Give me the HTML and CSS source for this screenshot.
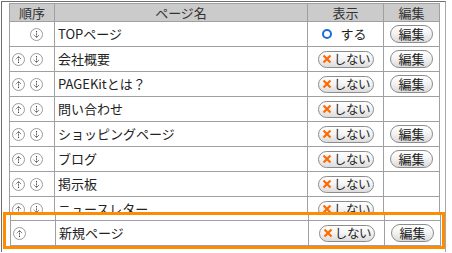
FILE: index.html
```html
<!DOCTYPE html>
<html lang="ja">
<head>
<meta charset="utf-8">
<link rel="stylesheet" href="styles.css">
</head>
<body>
<div class="frame">
  <table class="pages">
    <colgroup><col class="c1"><col class="c2"><col class="c3"><col class="c4"></colgroup>
    <thead>
      <tr><th>順序</th><th>ページ名</th><th>表示</th><th>編集</th></tr>
    </thead>
    <tbody>
      <tr>
        <td class="ord"><span class="arr blank"></span><svg class="arr" viewBox="0 0 13 13"><circle cx="6.5" cy="6.5" r="6"/><path d="M6.5 3v6.5M3.8 6.8l2.7 2.7 2.7-2.7"/></svg></td>
        <td class="name">TOPページ</td>
        <td class="show"><span class="on"><span class="ring"></span>する</span></td>
        <td class="edit"><span class="btn">編集</span></td>
      </tr>
      <tr>
        <td class="ord"><svg class="arr" viewBox="0 0 13 13"><circle cx="6.5" cy="6.5" r="6"/><path d="M6.5 10V3.5M3.8 6.2l2.7-2.7 2.7 2.7"/></svg><svg class="arr" viewBox="0 0 13 13"><circle cx="6.5" cy="6.5" r="6"/><path d="M6.5 3v6.5M3.8 6.8l2.7 2.7 2.7-2.7"/></svg></td>
        <td class="name">会社概要</td>
        <td class="show"><span class="btn off"><svg class="x" viewBox="0 0 10 10"><path d="M1.5 1.5l7 7M8.5 1.5l-7 7"/></svg>しない</span></td>
        <td class="edit"><span class="btn">編集</span></td>
      </tr>
      <tr>
        <td class="ord"><svg class="arr" viewBox="0 0 13 13"><circle cx="6.5" cy="6.5" r="6"/><path d="M6.5 10V3.5M3.8 6.2l2.7-2.7 2.7 2.7"/></svg><svg class="arr" viewBox="0 0 13 13"><circle cx="6.5" cy="6.5" r="6"/><path d="M6.5 3v6.5M3.8 6.8l2.7 2.7 2.7-2.7"/></svg></td>
        <td class="name">PAGEKitとは？</td>
        <td class="show"><span class="btn off"><svg class="x" viewBox="0 0 10 10"><path d="M1.5 1.5l7 7M8.5 1.5l-7 7"/></svg>しない</span></td>
        <td class="edit"><span class="btn">編集</span></td>
      </tr>
      <tr>
        <td class="ord"><svg class="arr" viewBox="0 0 13 13"><circle cx="6.5" cy="6.5" r="6"/><path d="M6.5 10V3.5M3.8 6.2l2.7-2.7 2.7 2.7"/></svg><svg class="arr" viewBox="0 0 13 13"><circle cx="6.5" cy="6.5" r="6"/><path d="M6.5 3v6.5M3.8 6.8l2.7 2.7 2.7-2.7"/></svg></td>
        <td class="name">問い合わせ</td>
        <td class="show"><span class="btn off"><svg class="x" viewBox="0 0 10 10"><path d="M1.5 1.5l7 7M8.5 1.5l-7 7"/></svg>しない</span></td>
        <td class="edit"></td>
      </tr>
      <tr>
        <td class="ord"><svg class="arr" viewBox="0 0 13 13"><circle cx="6.5" cy="6.5" r="6"/><path d="M6.5 10V3.5M3.8 6.2l2.7-2.7 2.7 2.7"/></svg><svg class="arr" viewBox="0 0 13 13"><circle cx="6.5" cy="6.5" r="6"/><path d="M6.5 3v6.5M3.8 6.8l2.7 2.7 2.7-2.7"/></svg></td>
        <td class="name">ショッピングページ</td>
        <td class="show"><span class="btn off"><svg class="x" viewBox="0 0 10 10"><path d="M1.5 1.5l7 7M8.5 1.5l-7 7"/></svg>しない</span></td>
        <td class="edit"><span class="btn">編集</span></td>
      </tr>
      <tr>
        <td class="ord"><svg class="arr" viewBox="0 0 13 13"><circle cx="6.5" cy="6.5" r="6"/><path d="M6.5 10V3.5M3.8 6.2l2.7-2.7 2.7 2.7"/></svg><svg class="arr" viewBox="0 0 13 13"><circle cx="6.5" cy="6.5" r="6"/><path d="M6.5 3v6.5M3.8 6.8l2.7 2.7 2.7-2.7"/></svg></td>
        <td class="name">ブログ</td>
        <td class="show"><span class="btn off"><svg class="x" viewBox="0 0 10 10"><path d="M1.5 1.5l7 7M8.5 1.5l-7 7"/></svg>しない</span></td>
        <td class="edit"><span class="btn">編集</span></td>
      </tr>
      <tr>
        <td class="ord"><svg class="arr" viewBox="0 0 13 13"><circle cx="6.5" cy="6.5" r="6"/><path d="M6.5 10V3.5M3.8 6.2l2.7-2.7 2.7 2.7"/></svg><svg class="arr" viewBox="0 0 13 13"><circle cx="6.5" cy="6.5" r="6"/><path d="M6.5 3v6.5M3.8 6.8l2.7 2.7 2.7-2.7"/></svg></td>
        <td class="name">掲示板</td>
        <td class="show"><span class="btn off"><svg class="x" viewBox="0 0 10 10"><path d="M1.5 1.5l7 7M8.5 1.5l-7 7"/></svg>しない</span></td>
        <td class="edit"></td>
      </tr>
      <tr>
        <td class="ord"><svg class="arr" viewBox="0 0 13 13"><circle cx="6.5" cy="6.5" r="6"/><path d="M6.5 10V3.5M3.8 6.2l2.7-2.7 2.7 2.7"/></svg><svg class="arr" viewBox="0 0 13 13"><circle cx="6.5" cy="6.5" r="6"/><path d="M6.5 3v6.5M3.8 6.8l2.7 2.7 2.7-2.7"/></svg></td>
        <td class="name">ニュースレター</td>
        <td class="show"><span class="btn off"><svg class="x" viewBox="0 0 10 10"><path d="M1.5 1.5l7 7M8.5 1.5l-7 7"/></svg>しない</span></td>
        <td class="edit"></td>
      </tr>
    </tbody>
  </table>

  <div class="highlight">
    <table class="pages">
      <colgroup><col class="c1"><col class="c2"><col class="c3"><col class="c4"></colgroup>
      <tbody>
        <tr class="gap"><td></td><td></td><td></td><td></td></tr>
        <tr>
          <td class="ord"><svg class="arr" viewBox="0 0 13 13"><circle cx="6.5" cy="6.5" r="6"/><path d="M6.5 10V3.5M3.8 6.2l2.7-2.7 2.7 2.7"/></svg><span class="arr blank"></span></td>
          <td class="name">新規ページ</td>
          <td class="show"><span class="btn off"><svg class="x" viewBox="0 0 10 10"><path d="M1.5 1.5l7 7M8.5 1.5l-7 7"/></svg>しない</span></td>
          <td class="edit"><span class="btn">編集</span></td>
        </tr>
      </tbody>
    </table>
  </div>
</div>
</body>
</html>
```

FILE: styles.css
```css
html, body {
  margin: 0;
  padding: 0;
  background: #fff;
}
body {
  font-family: "Noto Sans CJK JP", "Noto Sans", sans-serif;
  font-size: 13px;
  color: #222;
}
.frame {
  position: relative;
  margin: 1px 0 0 1px;
  width: 445px;
  height: 251px;
  box-sizing: border-box;
  border-top: 1px solid #6e6e6e;
  border-left: 1px solid #6e6e6e;
  border-right: 1px solid #a8a8a8;
  padding: 1px 0 0 7px;
  overflow: hidden;
}
.pages {
  border-collapse: collapse;
  table-layout: fixed;
  width: 430px;
}
.c1 { width: 45px; }
.c2 { width: 253px; }
.c3 { width: 76px; }
.c4 { width: 56px; }
.pages th,
.pages td {
  border: 1px solid #a0a0a0;
  padding: 0;
  line-height: 16px;
}
.pages th {
  background: #cbcbcb;
  font-weight: normal;
  color: #333;
  height: 17px;
  text-align: center;
}
.pages td {
  height: 24px;
}
.ord {
  padding-left: 2px !important;
  white-space: nowrap;
  font-size: 0;
}
.arr {
  display: inline-block;
  width: 13px;
  height: 13px;
  vertical-align: middle;
  margin-right: 5px;
}
.arr circle {
  fill: #fff;
  stroke: #9a9a9a;
  stroke-width: 1;
}
.arr path {
  fill: none;
  stroke: #444;
  stroke-width: 1;
  stroke-dasharray: 1 0.6;
}
.name {
  padding-left: 3px !important;
  white-space: nowrap;
}
.show, .edit {
  text-align: center;
  white-space: nowrap;
}
.on {
  display: inline-flex;
  align-items: center;
  gap: 8px;
  padding-right: 2px;
}
.ring {
  width: 6px;
  height: 6px;
  border: 2px solid #1a6fd4;
  border-radius: 50%;
}
.btn {
  display: inline-flex;
  align-items: center;
  justify-content: center;
  box-sizing: border-box;
  height: 18px;
  padding: 0 7px;
  border: 1px solid #8c8c8c;
  border-radius: 9px;
  background: linear-gradient(#ffffff, #f4f4f4 45%, #dcdcdc);
  color: #222;
  line-height: 16px;
  vertical-align: middle;
  white-space: nowrap;
}
.btn.off {
  width: 56px;
  padding: 0 1px 0 2px;
  height: 17px;
  gap: 2px;
  font-size: 12.5px;
  letter-spacing: -0.3px;
}
.x {
  flex: none;
  width: 10px;
  height: 10px;
}
.x path {
  stroke: #ff6a00;
  stroke-width: 2.2;
  fill: none;
}
.highlight {
  position: absolute;
  left: 1px;
  top: 210px;
  width: 442px;
  height: 37px;
  box-sizing: border-box;
  border: 3px solid #ff8c00;
  background: #fff;
  padding-left: 4px;
}
.highlight .pages .gap td {
  height: 5px;
  border-top: none;
}
```
